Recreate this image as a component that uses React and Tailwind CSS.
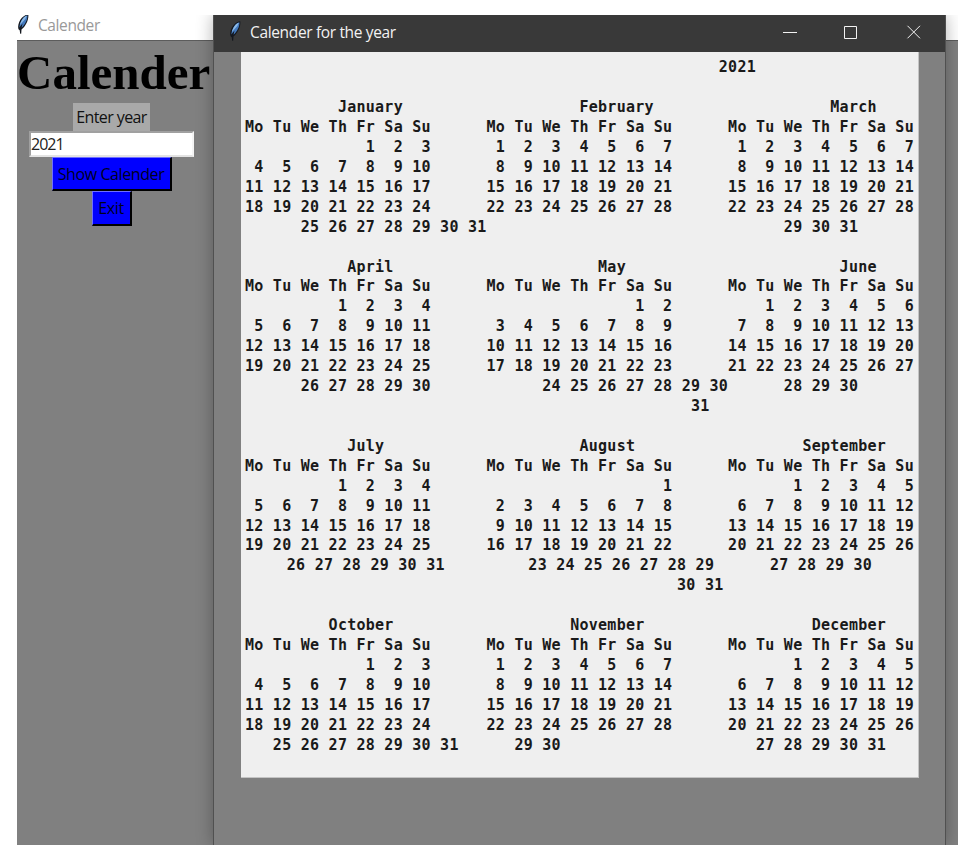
const DAYS = 'Mo Tu We Th Fr Sa Su';

// Places each [column, text] segment on one monospaced line.
const line = (...segments) =>
  segments.reduce((out, [column, text]) => out.padEnd(column) + text, '');

// One Monday-to-Sunday row ending on `lastDay`; days before the 1st stay blank.
const week = (lastDay) =>
  Array.from({ length: 7 }, (_, i) => {
    const day = lastDay - 6 + i;
    return (day > 0 ? String(day) : '').padStart(2);
  }).join(' ');

const weeks = (a, b, c) =>
  Array.from({ length: 4 }, (_, i) => line([0, week(a + i * 7)], [26, week(b + i * 7)], [52, week(c + i * 7)]));

const header = line([0, DAYS], [26, DAYS], [52, DAYS]);

const LINES = [
  line([51, '2021']),
  '',
  line([10, 'January'], [36, 'February'], [63, 'March']),
  header,
  ...weeks(3, 7, 7),
  line([6, '25 26 27 28 29 30 31'], [58, '29 30 31']),
  '',
  line([11, 'April'], [38, 'May'], [64, 'June']),
  header,
  ...weeks(4, 2, 6),
  line([6, '26 27 28 29 30'], [32, '24 25 26 27 28 29 30'], [58, '28 29 30']),
  line([48, '31']),
  '',
  line([11, 'July'], [36, 'August'], [60, 'September']),
  header,
  ...weeks(4, 1, 5),
  { half: line([4, '26 27 28 29 30 31'], [30, '23 24 25 26 27 28 29'], [56, '27 28 29 30']) },
  { half: line([46, '30 31']) },
  '',
  line([9, 'October'], [35, 'November'], [61, 'December']),
  header,
  ...weeks(3, 7, 5),
  line([3, '25 26 27 28 29 30 31'], [29, '29 30'], [55, '27 28 29 30 31']),
];

function Feather({ className }) {
  return (
    <svg viewBox="0 0 12 20" className={className}>
      <path d="M11.300 .3C7.500 .8 3.800 4 2.200 8C1.200 10.500 .8 13 1.500 15.200L2.700 16.200L3.200 19.800L4.200 19.800L4.500 15.500C8.500 12.500 12 6 11.300 .3Z" fill="#14181f" />
      <path d="M10.400 1.300C7 2 3.200 6.500 2.300 13.500L5.500 9.500L4.600 13.800C8.200 10.500 10.800 5.500 10.400 1.300Z" fill="#4379bd" />
      <path d="M9.800 1.800C6.500 3 3.800 6.800 2.900 11L8.300 5Z" fill="#8dbbe8" />
    </svg>
  );
}

function TkButton({ children, className }) {
  return (
    <button
      className={`mr-[1px] flex items-center justify-center border-t border-l border-r-2 border-b-2 border-t-[#6f6fff] border-l-[#6f6fff] border-r-black border-b-black bg-[#0000ff] text-[16px] leading-none text-[#00001c] ${className}`}
    >
      {children}
    </button>
  );
}

export default function App() {
  return (
    <div className="h-[857px] w-[971px] overflow-hidden bg-white pt-[15px] pl-[17px] font-['Open_Sans',sans-serif]">
      <div className="relative h-[830px] w-[941px] overflow-hidden bg-[#808080]">
        <header className="flex h-[26px] items-center border-b border-[#5c5c5c] bg-white">
          <Feather className="mt-[-7px] h-[20px] w-[12px]" />
          <span className="mt-[-4px] ml-[9px] text-[15.5px] tracking-[-0.4px] text-[#999]">Calender</span>
        </header>
        <main className="flex w-[190px] flex-col items-center">
          <h1 className="mr-[-2px] flex h-[62px] w-[192px] items-center pt-[1px] font-['Liberation_Serif',serif] text-[49px] leading-none font-bold whitespace-nowrap text-black">
            Calender
          </h1>
          <label className="mr-[1px] flex h-[28px] w-[77px] items-center justify-center bg-[#a9a9a9] text-[16px] tracking-[-0.6px] text-[#111]">
            Enter year
          </label>
          <div className="mr-[1px] flex h-[26px] w-[165px] items-center border-2 border-t-[#a0a0a0] border-r-[#f4f4f4] border-b-[#e3e3e3] border-l-[#a0a0a0] bg-white text-[16px] tracking-[-1px] text-[#222]">
            2021
          </div>
          <TkButton className="h-[34px] w-[120px] tracking-[-0.4px]">Show Calender</TkButton>
          <TkButton className="h-[35px] w-[40px] tracking-[-0.4px]">Exit</TkButton>
        </main>

        <section className="absolute top-0 left-[196px] h-[830px] w-[733px] border-x border-[#505050] bg-[#808080] shadow-[0_0_16px_rgba(0,0,0,0.3)]">
          <header className="flex h-[37px] items-center bg-[#393939] text-white">
            <Feather className="mt-[-5px] ml-[15px] h-[20px] w-[12px]" />
            <span className="mt-[-2px] ml-[9px] text-[15.5px] tracking-[-0.35px] text-[#f2f2f2]">Calender for the year</span>
            <svg viewBox="0 0 140 14" className="mt-[-4px] mr-[22px] ml-auto h-[14px] w-[140px]" fill="none" stroke="#f2f2f2">
              <path d="M0 7.500H14" />
              <path d="M61.500 1.500H73.500V13.500H61.500Z" />
              <path d="M124.500 .8L137 13.300M137 .8L124.500 13.300" />
            </svg>
          </header>
          <div className="ml-[27px] h-[726px] w-[678px] border-r border-b border-[#c4c4c4] bg-[#efefef] pt-[6.3px] pl-[4px] font-['DejaVu_Sans_Mono',monospace] text-[15px] leading-[19.93px] font-bold tracking-[0.26px] text-[#1a1a1a]">
            {LINES.map((entry, i) => (
              <pre key={i} className={`h-[19.93px] font-[inherit] ${entry.half ? 'pl-[4.65px]' : ''}`}>
                {entry.half ?? entry}
              </pre>
            ))}
          </div>
        </section>
      </div>
    </div>
  );
}
